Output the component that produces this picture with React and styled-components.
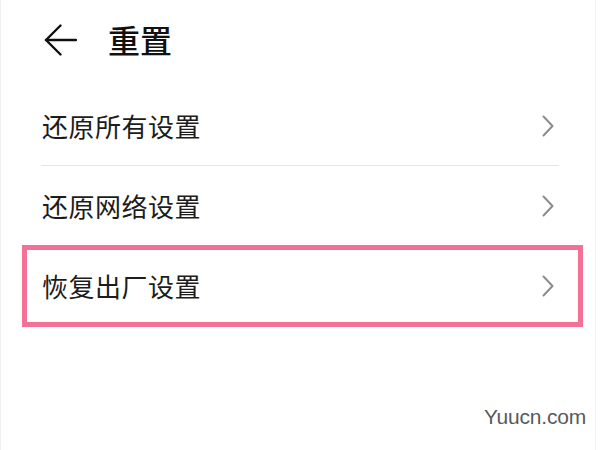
import React from "react";
import styled, {createGlobalStyle} from "styled-components";

const GlobalStyle = createGlobalStyle`
  html, body {
    margin: 0;
    padding: 0;
    background: #fff;
  }
  body {
    font-family: "Noto Sans CJK SC", "Noto Sans", sans-serif;
  }
`;

const Frame = styled.div`
  position: relative;
  width: 596px;
  height: 450px;
  background: #fff;
  border-left: 1px solid #f1f1f1;
  border-right: 1px solid #f1f1f1;
  box-sizing: border-box;
  overflow: hidden;
`;

const Header = styled.div`
  height: 80px;
  margin-bottom: 6px;
  display: flex;
  align-items: center;
  padding-left: 43px;
  gap: 31px;
`;

const BackButton = styled.div`
  width: 33px;
  height: 32px;
  display: flex;
  align-items: center;
  justify-content: center;
`;

const Title = styled.h1`
  margin: 0 0 2px;
  font-size: 32px;
  font-weight: 500;
  color: #111;
  line-height: 1;
`;

const List = styled.div`
  padding: 0 36px 0 40px;
  display: flex;
  flex-direction: column;
`;

const Row = styled.div`
  height: 79px;
  display: flex;
  align-items: center;
  justify-content: space-between;
  padding: 0 5px 0 1px;
  border-bottom: ${({divider}) => (divider ? "1px solid #e6e6e6" : "none")};
`;

const HighlightRow = styled(Row)`
  height: 72px;
  margin: 0 -24px 0 -19px;
  padding: 0 24px 0 15px;
  border: 5px solid #f37096;
`;

const Label = styled.span`
  font-size: 26px;
  color: #1c1c1c;
  line-height: 1;
  letter-spacing: 0.5px;
`;

const Watermark = styled.div`
  position: absolute;
  right: 9px;
  top: 405px;
  font-family: "Liberation Sans", Arial, sans-serif;
  font-size: 21px;
  color: #5a5a5a;
  letter-spacing: -0.2px;
`;

const BackArrow = () => (
  <svg width="33" height="32" viewBox="0 0 33 32" fill="none">
    <path d="M2 16 H32" stroke="#111" strokeWidth="2.4" strokeLinecap="round" />
    <path d="M16.5 1.5 L2 16 L16.5 30.5" stroke="#111" strokeWidth="2.4" strokeLinecap="round" strokeLinejoin="round" />
  </svg>
);

const Chevron = () => (
  <svg width="12" height="22" viewBox="0 0 12 22" fill="none">
    <path d="M1.5 1.5 L10.5 11 L1.5 20.5" stroke="#8c8c8c" strokeWidth="2" strokeLinecap="round" strokeLinejoin="round" />
  </svg>
);

const items = [
  {label: "还原所有设置", divider: true},
  {label: "还原网络设置"},
];

export default function App() {
  return (
    <>
      <GlobalStyle />
      <Frame>
        <Header>
          <BackButton>
            <BackArrow />
          </BackButton>
          <Title>重置</Title>
        </Header>
        <List>
          {items.map((item) => (
            <Row key={item.label} divider={item.divider}>
              <Label>{item.label}</Label>
              <Chevron />
            </Row>
          ))}
          <HighlightRow>
            <Label>恢复出厂设置</Label>
            <Chevron />
          </HighlightRow>
        </List>
        <Watermark>Yuucn.com</Watermark>
      </Frame>
    </>
  );
}
